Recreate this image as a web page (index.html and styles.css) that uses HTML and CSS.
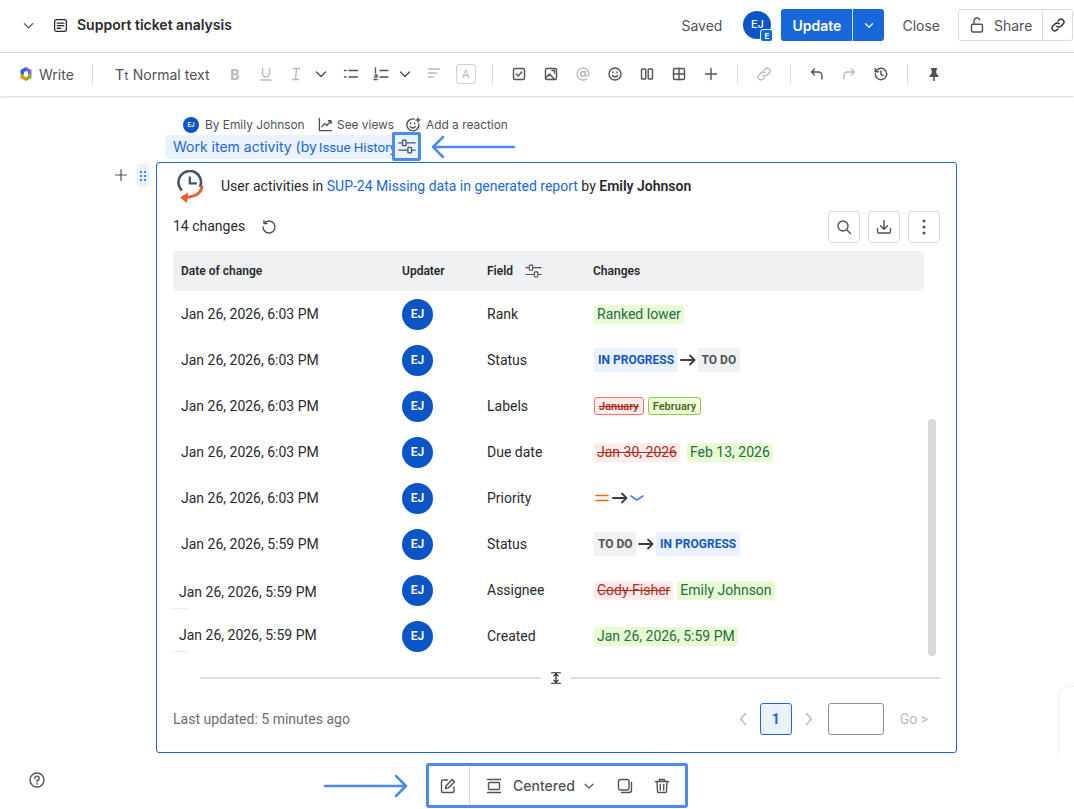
FILE: index.html
```html
<!DOCTYPE html>
<html lang="en">
<head>
<meta charset="utf-8">
<title>Support ticket analysis</title>
<link rel="stylesheet" href="styles.css">
</head>
<body>
<div class="page">
  <header class="topbar">
    <svg class="ic chev-top" viewBox="0 0 16 16"><path d="M3.5 6l4.5 4.5L12.500 6"/></svg>
    <svg class="ic doc" viewBox="0 0 16 16"><rect x="1.700" y="1.700" width="12.600" height="12.600" rx="2"/><path d="M4.500 5.500h7M4.500 8.200h7M4.500 10.900h3.500"/></svg>
    <h1 class="title">Support ticket analysis</h1>
    <span class="saved">Saved</span>
    <span class="avatar-wrap"><span class="avatar av-top">EJ</span><span class="badge">E</span></span>
    <span class="update"><span class="update-main">Update</span><span class="update-more"><svg class="ic" viewBox="0 0 16 16"><path d="M4 6.500l4 4 4-4"/></svg></span></span>
    <span class="close">Close</span>
    <span class="share">
      <span class="share-main"><svg class="ic" viewBox="0 0 16 16"><rect x="2.500" y="7.300" width="11" height="7.700" rx="1.500"/><path d="M5 7.300V4a3 3 0 0 1 5.800-1.100"/></svg>Share</span>
      <span class="share-link"><svg class="ic" viewBox="0 0 16 16"><path d="M6.800 9.200a2.800 2.800 0 0 0 4 0l2.300-2.300a2.800 2.800 0 0 0-4-4L8 4"/><path d="M9.200 6.800a2.800 2.800 0 0 0-4 0L2.900 9.100a2.800 2.800 0 0 0 4 4L8 12"/></svg></span>
    </span>
  </header>

  <nav class="toolbar">
    <svg class="logo" viewBox="0 0 16 16"><path fill="#1868db" d="M8 1L2.500 4v4H6V6l2-1z"/><path fill="#f18d13" d="M2.500 8v4L8 15v-3.500L6 10V8z"/><path fill="#8f5cf0" d="M8 1l5.500 3v4H10V6L8 5z"/><path fill="#82b536" d="M13.500 8v4L8 15v-3.500L10 10V8z"/></svg>
    <span class="tool-text write">Write</span>
    <span class="sep sep-first"></span>
    <span class="tool-text tt">T<small>t</small></span>
    <span class="tool-text normal">Normal text</span>
    <span class="cell w30 off glyph bold">B</span>
    <span class="cell off"><svg class="ic" viewBox="0 0 16 16"><path d="M4.500 2.500v5a3.500 3.500 0 0 0 7 0v-5M3 14h10"/></svg></span>
    <span class="cell w28 off"><svg class="ic" viewBox="0 0 16 16"><path d="M5.500 2.500h6M4.500 13.500h6M8.500 2.500l-1 11"/></svg></span>
    <span class="cell w22"><svg class="ic" viewBox="0 0 16 16"><path d="M3.500 6l4.500 4.500L12.500 6"/></svg></span>
    <span class="cell w38"><svg class="ic" viewBox="0 0 16 16"><path d="M6 4.500h8.500M6 11h8.500M1.500 4.500h1.500M1.500 11h1.500"/></svg></span>
    <span class="cell w22"><svg class="ic" viewBox="0 0 16 16"><path d="M7 4.500h8M7 11h8M2.500 2v5M1 13.500h3M2 9h2v2H1.500"/></svg></span>
    <span class="cell w26"><svg class="ic" viewBox="0 0 16 16"><path d="M3.500 6l4.500 4.500L12.500 6"/></svg></span>
    <span class="cell off"><svg class="ic" viewBox="0 0 16 16"><path d="M2.500 3h11M2.500 7h8M2.500 11h5"/></svg></span>
    <span class="cell"><span class="boxed-a">A</span></span>
    <span class="sep"></span>
    <span class="cell"><svg class="ic" viewBox="0 0 16 16"><rect x="2.500" y="2.500" width="11" height="11" rx="1.500"/><path d="M5.200 8l2 2 3.600-4"/></svg></span>
    <span class="cell"><svg class="ic" viewBox="0 0 16 16"><rect x="2.500" y="2.500" width="11" height="11" rx="1.500"/><path d="M2.500 12l4-4 5 5.500M9 4.500h2.500V7"/></svg></span>
    <span class="cell off"><svg class="ic" viewBox="0 0 16 16"><circle cx="8" cy="8" r="2.500"/><path d="M10.500 5.500v3.200a1.800 1.800 0 0 0 3.500 0V8a6 6 0 1 0-2.500 4.900"/></svg></span>
    <span class="cell"><svg class="ic" viewBox="0 0 16 16"><circle cx="8" cy="8" r="6"/><path d="M5.300 9.500c1.200 1.700 4.200 1.700 5.400 0M6 6v.8M10 6v.8"/></svg></span>
    <span class="cell"><svg class="ic" viewBox="0 0 16 16"><rect x="2.500" y="3" width="4.300" height="10" rx=".8"/><rect x="9.200" y="3" width="4.300" height="10" rx=".8"/></svg></span>
    <span class="cell"><svg class="ic" viewBox="0 0 16 16"><rect x="2.500" y="2.500" width="11" height="11" rx="1.500"/><path d="M8 2.500v11M2.500 8h11"/></svg></span>
    <span class="cell"><svg class="ic" viewBox="0 0 16 16"><path d="M8 2.500v11M2.500 8h11"/></svg></span>
    <span class="sep"></span>
    <span class="cell off"><svg class="ic" viewBox="0 0 16 16"><path d="M6.800 9.200a2.800 2.800 0 0 0 4 0l2.300-2.300a2.800 2.800 0 0 0-4-4L8 4"/><path d="M9.200 6.800a2.800 2.800 0 0 0-4 0L2.900 9.100a2.800 2.800 0 0 0 4 4L8 12"/></svg></span>
    <span class="sep"></span>
    <span class="cell"><svg class="ic" viewBox="0 0 16 16"><path d="M5.500 3L2.500 6l3 3M2.500 6h7a3.500 3.500 0 0 1 3.500 3.500V13"/></svg></span>
    <span class="cell off"><svg class="ic" viewBox="0 0 16 16"><path d="M10.500 3l3 3-3 3M13.500 6h-7A3.500 3.500 0 0 0 3 9.500V13"/></svg></span>
    <span class="cell"><svg class="ic" viewBox="0 0 16 16"><path d="M2.300 8a5.700 5.700 0 1 0 1.600-4L2.300 5.700M2.300 2.500v3.200h3.200M8 5v3.300l2 1.300"/></svg></span>
    <span class="sep"></span>
    <span class="cell"><svg class="ic pin" viewBox="0 0 16 16"><path d="M5 2h6v1.500L10.300 4v3.300L12.500 10v1h-3.700v4h-1.600v-4H3.500v-1l2.200-2.700V4L5 3.500z"/></svg></span>
  </nav>

  <main class="main">
    <div class="meta">
      <span class="avatar av-meta">EJ</span>
      <span class="meta-by">By Emily Johnson</span>
      <svg class="ic m-views" viewBox="0 0 16 16"><path d="M1.500 1.500v13h13M4 10.500l3-3.500 2.500 2L14 4M11 4h3v3"/></svg>
      <span class="meta-see">See views</span>
      <svg class="ic m-react" viewBox="0 0 16 16"><path d="M13.800 7a6 6 0 1 1-4.800-5"/><path d="M5 9.500c1.200 2 4.300 2 5.500 0M5.500 6v.8M9.700 6v.8M13 1v4M11 3h4"/></svg>
      <span>Add a reaction</span>
    </div>

    <div class="title-row">
      <div class="macro-title">Work item activity (by<span class="macro-rest">Issue History</span></div>
      <span class="config-box"><svg class="ic" viewBox="0 0 20 20"><use href="#sliders"/></svg></span>
      <svg class="arrow arrow-left" viewBox="0 0 86 24"><path d="M84 12H3M13 2L3 12l10 10"/></svg>
    </div>

    <div class="editor">
      <div class="gutter">
        <svg class="ic g-plus" viewBox="0 0 16 16"><path d="M8 2.500v11M2.500 8h11"/></svg>
        <span class="drag"><svg viewBox="0 0 8 12"><g fill="#1868db"><circle cx="2" cy="2" r="1.100"/><circle cx="6" cy="2" r="1.100"/><circle cx="2" cy="6" r="1.100"/><circle cx="6" cy="6" r="1.100"/><circle cx="2" cy="10" r="1.100"/><circle cx="6" cy="10" r="1.100"/></g></svg></span>
      </div>
      <section class="card">
        <div class="card-head">
          <svg class="clock" viewBox="0 0 28 34"><path fill="none" stroke="#44546f" stroke-width="2.600" d="M6 20.500A11.300 11.300 0 1 1 24 17"/><path fill="none" stroke="#44546f" stroke-width="2.300" d="M13.800 6.500v6.800h7"/><path fill="none" stroke="#f15b2a" stroke-width="3" d="M26 15.500c-.5 7-6 11-15 11.700"/><path fill="#f15b2a" d="M12 22.500l-8 5 7 5.500z"/></svg>
          <p class="card-title">User activities in <a class="lnk">SUP-24 Missing data in generated report</a> by <b>Emily Johnson</b></p>
        </div>

        <div class="actions">
          <span class="count">14 changes</span>
          <svg class="ic reset" viewBox="0 0 16 16"><path d="M3.300 4.300A6 6 0 1 1 2 8M3 1.500v3h3"/></svg>
          <span class="btns">
            <span class="sq"><svg class="ic" viewBox="0 0 16 16"><circle cx="7" cy="7" r="5"/><path d="M10.700 10.700l3.800 3.800"/></svg></span>
            <span class="sq"><svg class="ic" viewBox="0 0 16 16"><path d="M8 1.500V10M4.500 6.800L8 10.300l3.500-3.500M1.500 9.500v3.300a1.200 1.200 0 0 0 1.200 1.200h10.600a1.200 1.200 0 0 0 1.200-1.200V9.500"/></svg></span>
            <span class="sq"><svg class="dots" viewBox="0 0 4 16"><circle cx="2" cy="2" r="1.500"/><circle cx="2" cy="8" r="1.500"/><circle cx="2" cy="14" r="1.500"/></svg></span>
          </span>
        </div>

        <div class="thead row">
          <span>Date of change</span><span>Updater</span>
          <span class="field-h">Field<svg class="ic" viewBox="0 0 20 20"><use href="#sliders"/></svg></span>
          <span>Changes</span>
        </div>
        <div class="tbody">
          <div class="row"><span>Jan 26, 2026, 6:03 PM</span><span class="avatar av-row">EJ</span><span>Rank</span><span class="chg"><span class="tag add">Ranked lower</span></span></div>
          <div class="row"><span>Jan 26, 2026, 6:03 PM</span><span class="avatar av-row">EJ</span><span>Status</span><span class="chg"><span class="st st-b">IN PROGRESS</span><svg class="ic to" viewBox="0 0 16 16"><path d="M1 8h13.500M10 3.500L14.500 8 10 12.500"/></svg><span class="st st-g">TO DO</span></span></div>
          <div class="row"><span>Jan 26, 2026, 6:03 PM</span><span class="avatar av-row">EJ</span><span>Labels</span><span class="chg gap4"><span class="lab lab-r">January</span><span class="lab lab-g">February</span></span></div>
          <div class="row"><span>Jan 26, 2026, 6:03 PM</span><span class="avatar av-row">EJ</span><span>Due date</span><span class="chg gap7"><span class="tag del">Jan 30, 2026</span><span class="tag add">Feb 13, 2026</span></span></div>
          <div class="row"><span>Jan 26, 2026, 6:03 PM</span><span class="avatar av-row">EJ</span><span>Priority</span><span class="chg"><svg class="prio" viewBox="0 0 14 8"><path d="M1 1.500h12" stroke="#e56910"/><path d="M1 6.500h12" stroke="#e56910"/></svg><svg class="ic to to-p" viewBox="0 0 16 16"><path d="M1 8h13.500M10 3.500L14.500 8 10 12.500"/></svg><svg class="prio" viewBox="0 0 14 8"><path d="M1 2l6 4 6-4" stroke="#4688ec"/></svg></span></div>
          <div class="row"><span>Jan 26, 2026, 5:59 PM</span><span class="avatar av-row">EJ</span><span>Status</span><span class="chg"><span class="st st-g">TO DO</span><svg class="ic to" viewBox="0 0 16 16"><path d="M1 8h13.500M10 3.500L14.500 8 10 12.500"/></svg><span class="st st-b">IN PROGRESS</span></span></div>
          <div class="row"><span class="shift shift-a">Jan 26, 2026, 5:59 PM</span><span class="avatar av-row">EJ</span><span>Assignee</span><span class="chg gap4"><span class="tag del">Cody Fisher</span><span class="tag add">Emily Johnson</span></span></div>
          <div class="row"><span class="shift shift-b">Jan 26, 2026, 5:59 PM</span><span class="avatar av-row">EJ</span><span>Created</span><span class="chg"><span class="tag add">Jan 26, 2026, 5:59 PM</span></span></div>
          <span class="scrollbar"></span>
        </div>

        <div class="resize">
          <span class="rule rule-l"></span>
          <svg class="ic rs" viewBox="0 0 16 16"><path d="M3 2h10M3 14h10M8 3v10M5.500 5.500L8 3l2.500 2.500M5.500 10.500L8 13l2.500-2.500"/></svg>
          <span class="rule"></span>
        </div>

        <footer class="foot">
          <span class="updated">Last updated: 5 minutes ago</span>
          <span class="pager">
            <svg class="ic pg" viewBox="0 0 8 14"><path d="M6.500 1.500L1.500 7l5 5.500"/></svg>
            <span class="pg-cur">1</span>
            <svg class="ic pg" viewBox="0 0 8 14"><path d="M1.500 1.500l5 5.500-5 5.500"/></svg>
            <span class="pg-input"></span>
            <span class="pg-go">Go &gt;</span>
          </span>
        </footer>
      </section>
    </div>

    <div class="float-row">
      <div class="float-wrap">
        <svg class="arrow arrow-right" viewBox="0 0 86 24"><path d="M2 12h81M73 2l10 10-10 10"/></svg>
        <div class="float-bar">
          <span class="fb-edit"><svg class="ic" viewBox="0 0 16 16"><path d="M7.500 2H3a1.500 1.500 0 0 0-1.500 1.500V13A1.500 1.500 0 0 0 3 14.500h9.500A1.500 1.500 0 0 0 14 13V9"/><path d="M5.500 10.500l.6-2.800L12.300 1.500l2.200 2.200-6.200 6.200z"/></svg></span>
          <svg class="ic fb-center" viewBox="0 0 16 16"><path d="M1.500 1.500h13M1.500 14.500h13"/><rect x="2.500" y="4.500" width="11" height="7" rx="1"/></svg>
          <span class="fb-text">Centered</span>
          <svg class="ic fb-chev" viewBox="0 0 16 16"><path d="M3.500 6l4.500 4.500L12.500 6"/></svg>
          <svg class="ic fb-copy" viewBox="0 0 16 16"><rect x="1.500" y="1.500" width="10.500" height="10.500" rx="2"/><path d="M14.500 4.500V12a2.500 2.500 0 0 1-2.500 2.500H4.500"/></svg>
          <svg class="ic fb-trash" viewBox="0 0 16 16"><path d="M1.500 3.500h13M5.500 3.500V1.500h5v2M3 3.500l.5 10a1 1 0 0 0 1 1h7a1 1 0 0 0 1-1l.5-10M6.300 6.500v5.500M9.700 6.500v5.500"/></svg>
        </div>
      </div>
    </div>
  </main>

  <svg class="ic help" viewBox="0 0 16 16"><circle cx="8" cy="8" r="7"/><path d="M5.800 6.200A2.200 2.200 0 1 1 8 8.500v1M8 11.300v.9"/></svg>
  <span class="corner"></span>
  <span class="tick tick-a"></span>
  <span class="tick tick-b"></span>

  <svg class="defs" width="0" height="0"><defs><symbol id="sliders" viewBox="0 0 20 20"><path d="M1 5.500h3M10 5.500h9M1 13.500h9M16 13.500h3"/><rect x="5" y="2.500" width="4" height="6" rx=".8"/><rect x="11" y="10.500" width="4" height="6" rx=".8"/></symbol></defs></svg>
</div>
</body>
</html>
```
FILE: styles.css
```css
* { box-sizing: border-box; }
html, body { margin: 0; padding: 0; }
body { background: #fff; color: #292a2e; font-family: Inter, "Liberation Sans", sans-serif; }
.page { position: relative; width: 1074px; height: 809px; overflow: hidden; }
.ic { width: 16px; height: 16px; flex: none; fill: none; stroke: currentColor; stroke-width: 1.400; stroke-linecap: round; stroke-linejoin: round; display: block; }
.avatar { display: flex; align-items: center; justify-content: center; border-radius: 50%; background: #0b55c6; color: #fff; font-weight: 600; flex: none; }

/* top bar */
.topbar { height: 53px; border-bottom: 1px solid #dcdde0; display: flex; align-items: center; padding: 0 0 2px 21px; }
.chev-top { width: 15px; height: 15px; color: #505258; }
.doc { margin-left: 17px; color: #292a2e; width: 15px; height: 15px; }
.title { font-size: 14px; font-weight: 600; margin: 0 0 2px 9px; color: #292a2e; flex: 1; }
.saved { font-size: 14px; color: #505258; }
.avatar-wrap { position: relative; margin-left: 21px; width: 28px; height: 28px; }
.av-top { width: 28px; height: 28px; font-size: 11px; font-weight: 500; padding-bottom: 2px; }
.badge { position: absolute; right: -2px; bottom: -3px; width: 13px; height: 13px; background: #0b66e4; color: #fff; font-size: 8px; font-weight: 700; border: 1px solid #fff; border-radius: 3px; display: flex; align-items: center; justify-content: center; }
.update { margin-left: 10px; display: flex; height: 32px; background: #1868db; color: #fff; border-radius: 3px; font-size: 14px; font-weight: 600; }
.update-main { width: 72px; display: flex; align-items: center; justify-content: center; border-right: 1px solid #cfe1fd; }
.update-more { width: 31px; display: flex; align-items: center; justify-content: center; }
.update-more .ic { width: 14px; height: 14px; stroke-width: 1.500; }
.close { margin-left: 18px; font-size: 14px; color: #505258; }
.share { margin-left: 18px; display: flex; height: 32px; width: 115px; margin-right: 1px; border: 1px solid #dcdde0; border-radius: 3px; color: #505258; font-size: 14px; }
.share-main { display: flex; align-items: center; gap: 9px; padding-left: 10px; width: 84px; border-right: 1px solid #dcdde0; }
.share-link { flex: 1; display: flex; align-items: center; justify-content: center; color: #292a2e; }

/* toolbar */
.toolbar { height: 43px; display: flex; align-items: center; padding: 0 0 1px 18px; color: #505258; box-shadow: 0 1px 2px rgba(9, 30, 66, .18); position: relative; }
.logo { width: 16px; height: 16px; flex: none; }
.tool-text { font-size: 14px; color: #505258; }
.write { margin-left: 5px; }
.sep { width: 1px; height: 20px; background: #dcdde0; margin: 0 10px; flex: none; }
.sep-first { margin: 0 0 0 18px; }
.tt { margin-left: 22px; width: 18px; font-size: 15px; }
.tt small { font-size: 12px; }
.normal { width: 87px; }
.cell { width: 32px; height: 24px; display: flex; align-items: center; justify-content: center; flex: none; }
.w22 { width: 22px; } .w26 { width: 26px; } .w28 { width: 28px; } .w30 { width: 30px; } .w38 { width: 38px; }
.off { color: #b7b9be; }
.glyph { font-size: 14px; }
.bold { font-weight: 700; }
.boxed-a { width: 20px; height: 20px; border: 1px solid #cfd0d4; border-radius: 3px; color: #b7b9be; font-size: 11px; display: flex; align-items: center; justify-content: center; }
.pin { fill: #505258; stroke: none; }

/* main */
.main { padding-top: 20px; }
.meta { height: 17px; padding-left: 183px; display: flex; align-items: center; font-size: 11.900px; color: #505258; }
.av-meta { width: 16px; height: 16px; font-size: 6px; }
.meta-by { margin-left: 6px; width: 113px; }
.m-views { width: 15px; height: 15px; }
.meta-see { margin-left: 4px; width: 69px; }
.m-react { margin-right: 5px; margin-left: -1px; }
.title-row { display: flex; align-items: center; margin-left: 165px; height: 29px; margin-top: -1px; position: relative; }
.macro-title { width: 227px; height: 24px; background: #e9f2fe; color: #1868db; font-size: 14px; padding-left: 8px; border-radius: 3px 0 0 3px; display: flex; align-items: center; white-space: nowrap; }
.macro-rest { margin-left: 2px; font-family: Roboto, sans-serif; font-size: 13.500px; letter-spacing: -.1px; }
.config-box { width: 29px; height: 29px; border: 3px solid #4c8af0; border-radius: 2px; background: #e9f2fe; color: #44546f; display: flex; align-items: center; justify-content: center; }
.config-box .ic { width: 18px; height: 18px; stroke-width: 1.400; }
.arrow { fill: none; stroke: #4c8af0; stroke-width: 2.500; stroke-linecap: round; stroke-linejoin: round; width: 86px; height: 24px; flex: none; }
.arrow-left { margin-left: 9px; }

.editor { display: flex; padding-left: 113px; margin-top: 1px; }
.gutter { width: 43px; display: flex; align-items: flex-start; flex: none; padding-top: 2px; }
.g-plus { margin-top: 3px; color: #505258; width: 16px; height: 16px; stroke-width: 1.200; }
.drag { margin-left: 8px; width: 12px; height: 23px; background: #e9f2fe; border-radius: 3px; display: flex; align-items: center; justify-content: center; }
.drag svg { width: 8px; height: 12px; }
.card { width: 801px; height: 591px; border: 1px solid #1868db; border-radius: 3px; font-family: Roboto, sans-serif; font-size: 14px; color: #292a2e; padding: 0 16px; }
.card-head { display: flex; align-items: center; height: 48px; padding-left: 2px; }
.clock { width: 28px; height: 34px; flex: none; margin-left: 1px; }
.card-title { margin: 0 0 2px 17px; font-size: 14px; }
.lnk { color: #1868db; }
.card-title b { font-weight: 600; }
.actions { display: flex; align-items: center; height: 32px; }
.count { color: #292a2e; padding-bottom: 2px; }
.reset { margin-left: 16px; color: #505258; }
.btns { margin-left: auto; margin-right: 0; display: flex; gap: 8px; }
.sq { width: 32px; height: 32px; border: 1px solid #dcdde0; border-radius: 3px; display: flex; align-items: center; justify-content: center; color: #505258; }
.dots { width: 4px; height: 16px; fill: #505258; }

.row { display: grid; grid-template-columns: 221px 85px 106px 1fr; align-items: center; padding-left: 8px; height: 46px; }
.thead { width: 751px; height: 40px; margin-top: 8px; background: #f0f1f2; border-radius: 3px; font-size: 12px; font-weight: 600; }
.field-h { display: flex; align-items: center; gap: 12px; }
.field-h .ic { width: 17px; height: 17px; stroke-width: 1.300; color: #505258; }
.tbody { position: relative; height: 368px; }
.tbody .row { width: 751px; }
.av-row { width: 31px; height: 31px; font-size: 12px; font-weight: 600; }
.chg { display: flex; align-items: center; padding-left: 1px; }
.gap4 { gap: 4px; } .gap7 { gap: 7px; }
.tag { height: 19px; padding: 0 3px; border-radius: 3px; display: flex; align-items: center; }
.add { background: #e9fbd0; color: #216e4e; }
.del { background: #ffeceb; color: #ae2e24; text-decoration: line-through; }
.st { height: 24px; padding: 0 3.500px 0 4px; border-radius: 3px; font-size: 12px; font-weight: 700; display: flex; align-items: center; }
.st-b { background: #e9f2fe; color: #1558bc; }
.st-g { background: #f0f1f2; color: #505258; }
.to { width: 16px; height: 16px; color: #3b3d42; stroke-width: 1.800; margin: 0 2px 0 2px; padding: 0; }
.lab { height: 18px; padding: 0 4px; border-radius: 3px; border: 1px solid; font-size: 11px; font-weight: 600; display: flex; align-items: center; }
.lab-r { background: #ffeceb; border-color: #f87168; color: #ae2e24; text-decoration: line-through; }
.lab-g { background: #efffd6; border-color: #94c748; color: #4c6b1f; }
.prio { width: 14px; height: 8px; fill: none; stroke-width: 1.600; stroke-linecap: round; stroke-linejoin: round; margin-left: 1px; }
.to-p { margin: 0 1px 0 3px; }
.shift { position: relative; left: -2px; }
.shift-a { top: 2px; }
.shift-b { top: -1px; }
.scrollbar { position: absolute; left: 755px; top: 128px; width: 8px; height: 237px; background: #d9dadc; border-radius: 4px; }

.resize { display: flex; align-items: center; height: 3px; margin: 17px 0 0 27px; gap: 7px; }
.rule { height: 2px; flex: 1; background: #dcdde0; }
.rule-l { flex: none; width: 341px; }
.rs { width: 14px; height: 14px; color: #292a2e; margin: 0 0 0 1px; }
.foot { display: flex; align-items: center; justify-content: space-between; margin-top: 24px; height: 32px; }
.updated { color: #6b6e76; font-size: 14px; }
.pager { display: flex; align-items: center; margin-right: 12px; }
.pg { width: 8px; height: 14px; color: #b7b9be; }
.pg-cur { width: 32px; height: 32px; margin: 0 13px; border: 1px solid #1868db; border-radius: 3px; background: #e9f2fe; color: #1868db; font-weight: 700; display: flex; align-items: center; justify-content: center; }
.pg-input { width: 56px; height: 32px; margin-left: 15px; border: 1px solid #8c8f97; border-radius: 3px; }
.pg-go { margin-left: 16px; color: #b7b9be; }

.float-row { margin-top: 10px; display: flex; justify-content: flex-start; padding-left: 323px; }
.float-wrap { display: flex; align-items: center; }
.arrow-right { width: 86px; height: 24px; margin-right: 17px; }
.float-bar { width: 262px; height: 45px; border: 3px solid #4c8af0; border-radius: 3px; display: flex; align-items: center; color: #505258; font-size: 14px; font-weight: 500; }
.fb-edit { width: 41px; height: 39px; padding-right: 2px; display: flex; align-items: center; justify-content: center; border-right: 1px solid #dcdde0; flex: none; }
.fb-center { margin-left: 16px; }
.fb-text { margin-left: 11px; }
.fb-chev { margin-left: 7px; width: 14px; height: 14px; }
.fb-copy { margin-left: 21px; }
.fb-trash { margin-left: 21px; }

.help { position: absolute; left: 29px; top: 772px; color: #505258; }
.corner { position: absolute; left: 1058px; top: 686px; width: 30px; height: 70px; border: 1px solid #f0f1f2; border-right: 0; border-bottom: 0; border-radius: 12px 0 0 0; }
.tick { position: absolute; left: 171px; width: 17px; height: 1px; background: #ebecee; }
.tick-a { top: 608px; }
.tick-b { top: 651px; }
.defs { position: absolute; }
```
